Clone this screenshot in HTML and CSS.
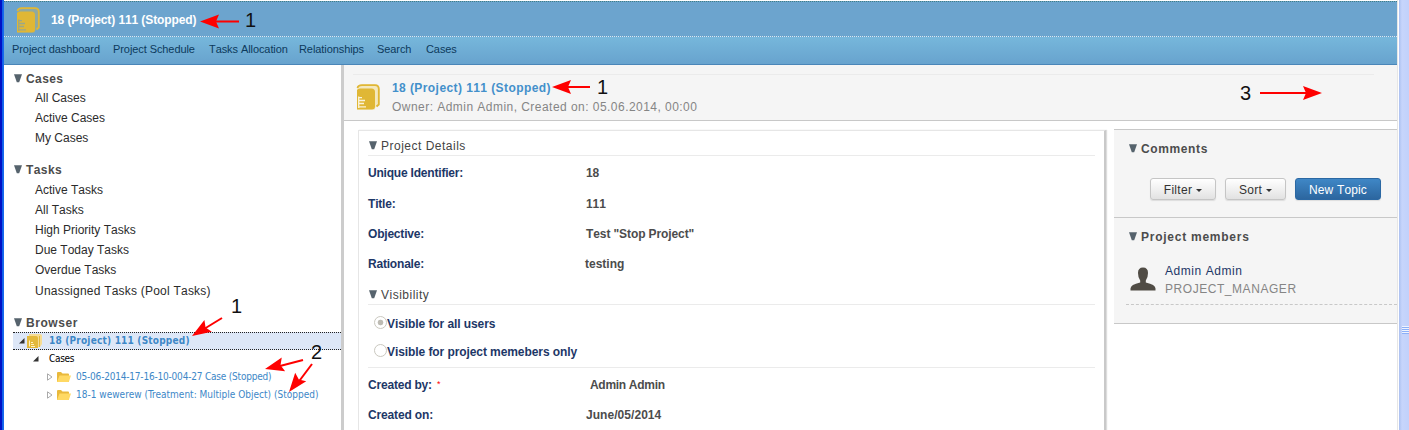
FILE: index.html
```html
<!DOCTYPE html>
<html lang="en">
<head>
<meta charset="utf-8">
<title>18 (Project) 111 (Stopped)</title>
<link rel="stylesheet" href="styles.css">
</head>
<body>
<svg class="defs" width="0" height="0">
  <symbol id="tri" viewBox="0 0 8 9"><path d="M0 .3h8L5.200 8.300H2.800z"/></symbol>
  <symbol id="open" viewBox="0 0 6 6"><path d="M5.5 0v5.5H0z"/></symbol>
  <symbol id="closed" viewBox="0 0 6 8"><path d="M.5.8v6.4L5 4z" fill="#fff" stroke="#aaa"/></symbol>
  <symbol id="folder" viewBox="0 0 15 12"><path d="M1 11V2q0-1 1-1h3l1.500 1.500H12q1 0 1 1V11z" fill="#e9b93c"/><path d="M1 11L3.500 4.500H15L12.800 11z" fill="#ffd964"/></symbol>
  <symbol id="book" viewBox="0 0 24 26">
    <path d="M1 5Q1.500.5 6 .5H19Q23.500.5 23.500 5V20L19 24V25.500H1z" class="page"/>
    <path d="M1.500 4Q2 1.200 6 1.200H19Q22.800 1.200 22.800 5V20.500L20.500 22.500" class="edge"/>
    <path d="M1 6Q2 4.500 4 4.500H15.500Q19 4.500 19 8V22.500Q19 25.500 16 25.500H1z" class="cover"/>
    <path d="M2.700 12.500V24M3 13.700H6M3 16.500H9M3 19.500H8M3 22.800H10" class="lines"/>
  </symbol>
</svg>
<div class="window">
  <div class="app">
    <header class="titlebar">
      <svg class="book on-blue"><use href="#book"/></svg>
      <h1 class="title">18 (Project) 111 (Stopped)</h1>
    </header>
    <nav class="menu">
      <a class="m1">Project dashboard</a><a class="m2">Project Schedule</a><a class="m3">Tasks Allocation</a><a class="m4">Relationships</a><a class="m5">Search</a><a>Cases</a>
    </nav>
    <div class="body">
      <aside class="sidebar">
        <h2 class="side-head"><svg class="tri"><use href="#tri"/></svg>Cases</h2>
        <ul class="links"><li>All Cases</li><li>Active Cases</li><li>My Cases</li></ul>
        <h2 class="side-head"><svg class="tri"><use href="#tri"/></svg>Tasks</h2>
        <ul class="links"><li>Active Tasks</li><li>All Tasks</li><li>High Priority Tasks</li><li>Due Today Tasks</li><li>Overdue Tasks</li><li class="pool">Unassigned Tasks (Pool Tasks)</li></ul>
        <h2 class="side-head browser"><svg class="tri"><use href="#tri"/></svg>Browser</h2>
        <div class="node root">
          <svg class="open"><use href="#open"/></svg>
          <svg class="minibook" viewBox="0 0 15 14"><path d="M2 0h11q2 0 2 2v8l-2 3H2z" fill="#f6dc93"/><path d="M0 2h9q2 0 2 2v10H0z" fill="#e3b93c"/><path d="M12.500 2v11" stroke="#e3b93c"/><path d="M2.500 6.500v6M4 8.500h2M4 10.500h3M4 12.500h4" stroke="#fff0bd"/></svg>
          <span class="root-name">18 (Project) 111 (Stopped)</span>
        </div>
        <div class="node cases"><svg class="open"><use href="#open"/></svg><span>Cases</span></div>
        <div class="node leaf"><svg class="closed"><use href="#closed"/></svg><svg class="folder"><use href="#folder"/></svg><span class="case1">05-06-2014-17-16-10-004-27 Case (Stopped)</span></div>
        <div class="node leaf"><svg class="closed"><use href="#closed"/></svg><svg class="folder"><use href="#folder"/></svg><span class="case2">18-1 wewerew (Treatment: Multiple Object) (Stopped)</span></div>
      </aside>
      <main class="main">
        <section class="summary">
          <div class="rule"></div>
          <div class="summary-row">
            <svg class="book"><use href="#book"/></svg>
            <div>
              <div class="sum-title">18 (Project) 111 (Stopped)</div>
              <div class="sum-meta">Owner: Admin Admin, Created on: 05.06.2014, 00:00</div>
            </div>
          </div>
        </section>
        <div class="columns">
          <section class="card">
            <h3 class="card-head"><svg class="tri"><use href="#tri"/></svg>Project Details</h3>
            <dl class="fields">
              <dt>Unique Identifier:</dt><dd>18</dd>
              <dt>Title:</dt><dd>111</dd>
              <dt>Objective:</dt><dd>Test "Stop Project"</dd>
              <dt>Rationale:</dt><dd class="loose">testing</dd>
            </dl>
            <h3 class="card-head vis"><svg class="tri"><use href="#tri"/></svg>Visibility</h3>
            <div class="radios">
              <div class="radio"><i class="dot on"></i>Visible for all users</div>
              <div class="radio"><i class="dot"></i>Visible for project memebers only</div>
            </div>
            <dl class="fields made">
              <dt>Created by: <b class="req">*</b></dt><dd class="by">Admin Admin</dd>
              <dt class="on-date">Created on:</dt><dd class="date">June/05/2014</dd>
            </dl>
          </section>
          <aside class="right">
            <section class="comments">
              <h3 class="right-head"><svg class="tri"><use href="#tri"/></svg>Comments</h3>
              <div class="buttons">
                <button class="btn filter">Filter<i class="caret"></i></button>
                <button class="btn sort">Sort<i class="caret"></i></button>
                <button class="btn primary">New Topic</button>
              </div>
            </section>
            <section class="members">
              <h3 class="right-head wide"><svg class="tri"><use href="#tri"/></svg>Project members</h3>
              <div class="member">
                <svg class="person" viewBox="0 0 26 24"><path d="M8 6q0-5.500 5-5.500T18 6q0 5-2.200 7.500v2q9.700 2 9.700 6v2H.5v-2q0-4 9.700-6v-2Q8 11 8 6z" fill="#504c45"/></svg>
                <div><div class="who">Admin Admin</div><div class="role">PROJECT_MANAGER</div></div>
              </div>
            </section>
          </aside>
        </div>
      </main>
    </div>
  </div>
  <div class="scroll"><div class="grip"></div></div>
</div>
<svg class="notes" width="1409" height="430">
  <g class="shaft"><path d="M213 21.500H239"/><path d="M564 87H590"/><path d="M1260 93H1306"/><path d="M222 318L204 329"/><path d="M303 360L280 366"/><path d="M312 364L297 384"/></g>
  <g class="tips">
    <path d="M0 0L19-7L16 0L19 7z" transform="translate(200 21.500)"/>
    <path d="M0 0L19-7L16 0L19 7z" transform="translate(552 87)"/>
    <path d="M0 0L19-7L16 0L19 7z" transform="translate(1322 93) rotate(180)"/>
    <path d="M0 0L19-7L16 0L19 7z" transform="translate(192 336) rotate(-32)"/>
    <path d="M0 0L19-7L16 0L19 7z" transform="translate(265 369) rotate(-14)"/>
    <path d="M0 0L19-7L16 0L19 7z" transform="translate(289 392) rotate(-52)"/>
  </g>
  <g class="nums"><text x="245" y="27">1</text><text x="597" y="94">1</text><text x="1240" y="100">3</text><text x="231" y="313">1</text><text x="311" y="359">2</text></g>
</svg>
</body>
</html>
```

FILE: styles.css
```css
* { box-sizing: border-box; }
body { margin: 0; width: 1409px; height: 430px; overflow: hidden; background: #fff; font: 12px/20px "Liberation Sans", Arial, sans-serif; font-kerning: none; color: #333; position: relative; }
h1, h2, h3, ul, dl, dd { margin: 0; padding: 0; font-size: 12px; }
ul { list-style: none; }
svg { display: block; flex: none; }
.defs { position: absolute; }
.window { display: flex; height: 430px; }
.app { width: 1399px; display: flex; flex-direction: column; padding: 0 2px 0 4px; background: linear-gradient(90deg, #0012c6 2px, #0d5be6 2px, #1a6cf0 4px, #fff 4px, #fff 1397px, #e6e6e6 1397px, #e6e6e6 1398px, #fff 1398px); }

.titlebar { flex: none; margin-top: 1px; height: 36px; background: #6ca4ce; border-top: 1px dotted #3f7f85; border-bottom: 1px dotted #dbe8f2; display: flex; align-items: center; padding: 1px 0 0 12px; }
.book { width: 24px; height: 26px; }
.book .page, .page { fill: var(--page, #f4e8bd); }
.edge { fill: none; stroke: #e0b735; stroke-width: 1.8px; }
.cover { fill: #e0b735; }
.lines { fill: none; stroke: var(--lines, #faf3dc); stroke-width: 1.3px; }
.on-blue { --page: #8fa9a0; --lines: #9aa88a; }
.title { color: #fff; margin-left: 11px; letter-spacing: -.1px; line-height: 16px; }
.menu { height: 28px; flex: none; background: linear-gradient(#76b7db, #68a3ce); border-bottom: 1px solid #4a86b8; display: flex; padding: 2px 0 0 8px; font-size: 11px; color: #0d3a5c; }
.menu a { flex: none; letter-spacing: -.08px; }
.m1 { width: 101px; }
.m2 { width: 96px; }
.m3 { width: 90px; }
.m4 { width: 78px; }
.m5 { width: 49px; }

.body { display: flex; height: 365px; flex: none; }
.sidebar { width: 340px; border-right: 3px solid #ccc; padding: 4px 0 0 9px; flex: none; }
.side-head { display: flex; align-items: center; height: 19px; color: #4c4c4c; letter-spacing: .4px; }
.links + .side-head { margin-top: 12px; height: 20px; }
.links + .side-head.browser { height: 19px; padding-top: 1px; letter-spacing: .55px; }
.tri { width: 8px; height: 9px; margin: 0 4px 1px 1px; fill: #56636d; }
.links { padding-left: 22px; color: #2b2b2b; }
.links li { height: 20px; }
.links .pool { height: 21px; padding-top: 1px; letter-spacing: .22px; }

.node { display: flex; align-items: center; font: 10px/16px "DejaVu Sans Condensed", "DejaVu Sans", sans-serif; font-stretch: condensed; color: #3d87c7; }
.root { height: 18px; background: #dde7f7; border-top: 1px dotted #222; border-bottom: 1px dotted #222; padding-left: 6px; }
.open { width: 6px; height: 6px; fill: #333; }
.minibook { width: 15px; height: 14px; margin: 0 7px 0 2px; }
.root-name { font-weight: bold; letter-spacing: .2px; }
.cases { height: 17px; padding-left: 20px; color: #000; letter-spacing: -.3px; }
.cases span { margin-left: 10px; }
.leaf { height: 18px; padding: 2px 0 0 34px; }
.case1 { letter-spacing: -.2px; }
.case2 { letter-spacing: .01px; }
.closed { width: 6px; height: 8px; margin-right: 3px; }
.folder { width: 15px; height: 12px; margin-right: 5px; }

.main { width: 1053px; flex: none; }
.summary { height: 56px; background: #f5f5f5; border-bottom: 1px solid #c8c8c8; padding-top: 9px; }
.rule { height: 1px; margin: 0 23px 0 9px; background: #ebebeb; }
.summary-row { display: flex; padding: 4px 0 0 12px; }
.summary-row .book { margin: 5px 12px 0 0; }
.sum-title { font-weight: bold; color: #4390cb; letter-spacing: .42px; line-height: 19px; }
.sum-meta { color: #858585; letter-spacing: .46px; line-height: 19px; }
.columns { display: flex; padding: 8px 0 0 14px; height: 309px; justify-content: space-between; }
.card { width: 748px; margin-top: 1px; padding: 5px 9px 0 9px; border-top: 1px solid #e6e6e6; border-left: 1px solid #e6e6e6; border-right: 2px solid #c9c9c9; box-shadow: 1px 0 1px #ddd; }
.card-head { display: flex; align-items: center; height: 20px; border-bottom: 1px solid #ebebeb; color: #444; font-weight: normal; letter-spacing: .5px; }
.card-head.vis { letter-spacing: .5px; margin-top: -1px; padding-top: 1px; }
.fields { display: grid; grid-template-columns: 218px 1fr; grid-template-rows: 31px 30px 30px 30px; height: 130px; font-weight: bold; padding-top: 7px; }
.fields dt { color: #1d3767; letter-spacing: -.2px; }
.fields dd { color: #4c4c4c; letter-spacing: -.1px; }
.fields .loose { letter-spacing: 0; margin-left: -1px; }
.radios { height: 63px; border-bottom: 1px solid #ebebeb; padding: 5px 0 0 6px; }
.radio { height: 28px; line-height: 28px; display: flex; font-weight: bold; color: #1d3767; letter-spacing: -.08px; }
.dot { width: 13px; height: 13px; border: 1px solid #cac8bf; border-radius: 50%; margin-top: 6px; background: #fff; flex: none; }
.dot.on { background: radial-gradient(#bdbbb3 2.5px, #fff 3.2px); }
.made { grid-template-rows: 30px 30px; height: 67px; }
.made dt { line-height: 20px; height: 20px; }
.fields .by { margin-left: 4px; letter-spacing: -.3px; }
.fields .date { letter-spacing: .05px; }
.fields .on-date { letter-spacing: -.15px; }
.req { color: #f00; font-size: 9px; line-height: 1; font-weight: normal; vertical-align: 2px; margin-left: 2px; }

.right { width: 283px; }
.comments { height: 88px; background: #f5f5f5; border-top: 1px solid #c8c8c8; padding-top: 9px; }
.right-head { display: flex; align-items: center; height: 20px; padding-left: 14px; color: #4c4c4c; letter-spacing: .62px; }
.wide { letter-spacing: .75px; }
.buttons { display: flex; padding: 19px 0 0 36px; }
.btn { height: 22px; border: 1px solid #c5c5c5; border-radius: 3px; font: inherit; line-height: 20px; letter-spacing: .3px; color: #333; background: linear-gradient(#fff, #e2e2e2); box-shadow: 0 1px 1px #ddd; padding: 1px 0 0; display: flex; align-items: center; justify-content: center; }
.filter { width: 66px; margin-right: 9px; }
.sort { width: 61px; margin-right: 9px; }
.primary { width: 86px; color: #fff; background: linear-gradient(#3f87c6, #2c669f); border-color: #2b68a3; letter-spacing: .15px; }
.caret { border: 3px solid transparent; border-top-color: #333; border-bottom: 0; margin: 2px 0 0 4px; }
.members { height: 107px; background: #f5f5f5; border-top: 1px solid #c8c8c8; border-bottom: 1px solid #c8c8c8; padding-top: 9px; }
.member { display: flex; margin-left: 12px; height: 58px; padding: 15px 0 0 4px; border-bottom: 1px dashed #c8c8c8; }
.person { width: 26px; height: 24px; margin: 5px 9px 0 0; }
.who { color: #1d3767; letter-spacing: .55px; line-height: 18px; }
.role { color: #858585; letter-spacing: .55px; line-height: 18px; }

.scroll { width: 10px; background: linear-gradient(90deg, #abc0f0, #c7d5fb 3px, #c1d1fb); padding: 326px 0 0 3px; }
.grip { height: 8px; background: repeating-linear-gradient(#eef4fe 0 1px, #8cb0f8 1px 2px); }

.notes { position: absolute; left: 0; top: 0; pointer-events: none; }
.shaft { stroke: #fe0000; stroke-width: 2; fill: none; }
.tips { fill: #fe0000; }
.nums { font-size: 20px; fill: #111; }
```
